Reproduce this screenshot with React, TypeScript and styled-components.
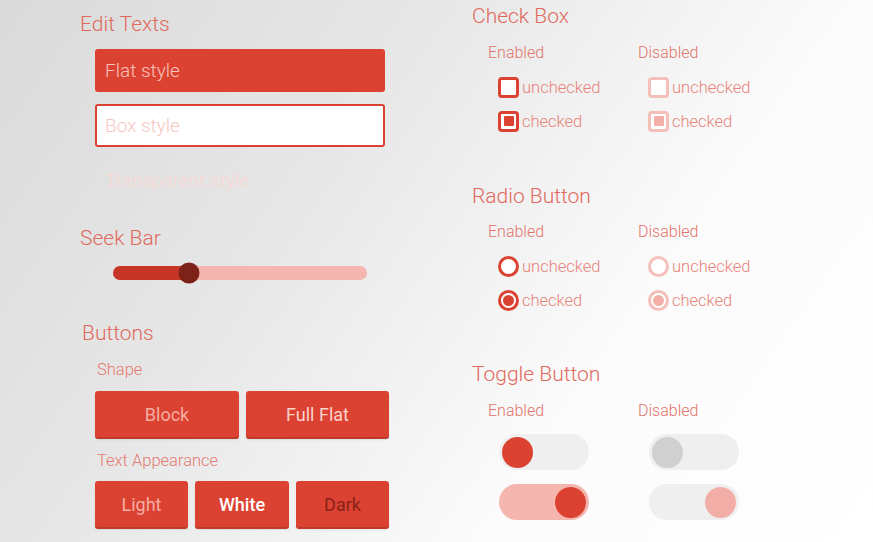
import React from 'react';
import styled, { createGlobalStyle } from 'styled-components';

const red = '#db4232';
const pink = '#f4b6ae';
const titleColor = '#e0695d';

const GlobalStyle = createGlobalStyle`
  html, body {
    margin: 0;
    padding: 0;
  }
  body {
    font-family: Roboto, "Noto Sans", "Liberation Sans", sans-serif;
    background: linear-gradient(125deg, #dadada 0%, #e7e7e7 35%, #fbfbfb 68%, #ffffff 100%);
    min-height: 542px;
    overflow: hidden;
  }
`;

const Page = styled.div`
  display: flex;
  width: 873px;
  height: 542px;
`;

const LeftColumn = styled.div`
  width: 392px;
  padding: 12px 0 0 80px;
  display: flex;
  flex-direction: column;
`;

const RightColumn = styled.div`
  padding: 4px 0 0 0;
  display: flex;
  flex-direction: column;
`;

const Title = styled.h2<{ $top?: number; $shift?: number }>`
  margin: ${(p) => p.$top ?? 0}px 0 0 ${(p) => p.$shift ?? 0}px;
  font-size: 21px;
  line-height: 24px;
  font-weight: 300;
  color: ${titleColor};
`;

const SubTitle = styled.div<{ $top?: number }>`
  margin: ${(p) => p.$top ?? 0}px 0 0 17px;
  font-size: 16.5px;
  line-height: 20px;
  font-weight: 300;
  color: #e57a70;
`;

const Field = styled.input<{ $variant: 'flat' | 'box' | 'clear' }>`
  box-sizing: border-box;
  width: 290px;
  height: 43px;
  margin: 12px 0 0 15px;
  padding: 0 8px;
  font-family: inherit;
  font-size: 19px;
  font-weight: 300;
  border-radius: 3px;
  outline: none;
  border: 2px solid ${(p) => (p.$variant === 'clear' ? 'transparent' : red)};
  background: ${(p) => (p.$variant === 'flat' ? red : p.$variant === 'box' ? '#fff' : 'transparent')};
  &::placeholder {
    color: ${(p) => (p.$variant === 'flat' ? '#f7c2bb' : p.$variant === 'box' ? '#f5c8c3' : '#f9d6d2')};
  }
`;

const SliderWrap = styled.div`
  width: 254px;
  height: 24px;
  margin: 11px 0 0 33px;
  display: flex;
  align-items: center;
`;

const Track = styled.div`
  position: relative;
  width: 100%;
  height: 14px;
  border-radius: 7px;
  background: ${pink};
`;

const Fill = styled.div`
  height: 100%;
  border-radius: 7px 0 0 7px;
  background: #c73526;
`;

const Thumb = styled.div`
  position: absolute;
  top: 50%;
  width: 21px;
  height: 21px;
  border-radius: 50%;
  background: #7c2219;
  transform: translate(-50%, -50%);
`;

const ButtonRow = styled.div<{ $top: number }>`
  display: flex;
  gap: 7px;
  margin: ${(p) => p.$top}px 0 0 15px;
`;

const Button = styled.button<{ $w: number; $text: string; $weight?: number }>`
  width: ${(p) => p.$w}px;
  height: 46px;
  border: none;
  border-radius: 3px;
  background: ${red};
  box-shadow: 0 2px 0 #bf3a2c, 0 3px 2px rgba(0, 0, 0, 0.08);
  color: ${(p) => p.$text};
  font-family: inherit;
  font-size: 18px;
  font-weight: ${(p) => p.$weight ?? 400};
  cursor: pointer;
`;

const Group = styled.div<{ $top: number }>`
  display: grid;
  grid-template-columns: 150px 150px;
  margin: ${(p) => p.$top}px 0 0 16px;
`;

const GroupCol = styled.div`
  display: flex;
  flex-direction: column;
`;

const GroupLabel = styled.div`
  font-size: 16px;
  line-height: 20px;
  font-weight: 300;
  color: #e2736a;
`;

const Option = styled.label<{ $top: number }>`
  display: flex;
  align-items: center;
  gap: 3px;
  height: 24px;
  margin: ${(p) => p.$top}px 0 0 10px;
  font-size: 16.5px;
  font-weight: 300;
  color: #e8837a;
`;

const Box = styled.span<{ $checked?: boolean; $disabled?: boolean }>`
  box-sizing: border-box;
  width: 21px;
  height: 21px;
  border-radius: 4px;
  border: 3px solid ${(p) => (p.$disabled ? '#f6c0ba' : red)};
  background: #fff;
  display: flex;
  align-items: center;
  justify-content: center;
  &::after {
    content: '';
    display: ${(p) => (p.$checked ? 'block' : 'none')};
    width: 10px;
    height: 10px;
    border-radius: 1px;
    background: ${(p) => (p.$disabled ? '#f4b0a8' : red)};
  }
`;

const Circle = styled(Box)`
  border-radius: 50%;
  &::after {
    border-radius: 50%;
    width: 11px;
    height: 11px;
  }
`;

const Toggle = styled.div<{ $top: number; $on?: boolean; $disabled?: boolean }>`
  box-sizing: border-box;
  width: 90px;
  height: 36px;
  margin: ${(p) => p.$top}px 0 0 11px;
  border-radius: 18px;
  background: ${(p) => (p.$on && !p.$disabled ? pink : '#efefef')};
  display: flex;
  align-items: center;
  justify-content: ${(p) => (p.$on ? 'flex-end' : 'flex-start')};
  padding: 0 3px;
`;

const Knob = styled.div<{ $color: string }>`
  width: 31px;
  height: 31px;
  border-radius: 50%;
  background: ${(p) => p.$color};
`;

const Seek = ({ value }: { value: number }) => (
  <SliderWrap>
    <Track>
      <Fill style={{ width: `${value}%` }} />
      <Thumb style={{ left: `${value}%` }} />
    </Track>
  </SliderWrap>
);

const CheckGroup = ({ round, top }: { round?: boolean; top: number }) => {
  const Mark = round ? Circle : Box;
  return (
    <Group $top={top}>
      {[false, true].map((disabled) => (
        <GroupCol key={String(disabled)}>
          <GroupLabel>{disabled ? 'Disabled' : 'Enabled'}</GroupLabel>
          <Option $top={12}>
            <Mark $disabled={disabled} />
            unchecked
          </Option>
          <Option $top={10}>
            <Mark $checked $disabled={disabled} />
            checked
          </Option>
        </GroupCol>
      ))}
    </Group>
  );
};

const App = () => (
  <Page>
    <GlobalStyle />
    <LeftColumn>
      <Title>Edit Texts</Title>
      <Field $variant="flat" placeholder="Flat style" style={{ marginTop: 13 }} />
      <Field $variant="box" placeholder="Box style" />
      <Field $variant="clear" placeholder="Transparent style" />

      <Title $top={24}>Seek Bar</Title>
      <Seek value={30} />

      <Title $top={36} $shift={2}>Buttons</Title>
      <SubTitle $top={15}>Shape</SubTitle>
      <ButtonRow $top={11}>
        <Button $w={144} $text="#f6ada3">Block</Button>
        <Button $w={143} $text="#fbd3cd">Full Flat</Button>
      </ButtonRow>
      <SubTitle $top={14}>Text Appearance</SubTitle>
      <ButtonRow $top={10}>
        <Button $w={93} $text="#f6ada3">Light</Button>
        <Button $w={94} $text="#ffffff" $weight={500}>White</Button>
        <Button $w={93} $text="#8a2117">Dark</Button>
      </ButtonRow>
    </LeftColumn>

    <RightColumn>
      <Title>Check Box</Title>
      <CheckGroup top={15} />

      <Title $top={51}>Radio Button</Title>
      <CheckGroup round top={14} />

      <Title $top={50}>Toggle Button</Title>
      <Group $top={15}>
        <GroupCol>
          <GroupLabel>Enabled</GroupLabel>
          <Toggle $top={13}>
            <Knob $color={red} />
          </Toggle>
          <Toggle $top={14} $on>
            <Knob $color={red} />
          </Toggle>
        </GroupCol>
        <GroupCol>
          <GroupLabel>Disabled</GroupLabel>
          <Toggle $top={13} $disabled>
            <Knob $color="#d0d0d0" />
          </Toggle>
          <Toggle $top={14} $on $disabled>
            <Knob $color="#f2aea6" />
          </Toggle>
        </GroupCol>
      </Group>
    </RightColumn>
  </Page>
);

export default App;
